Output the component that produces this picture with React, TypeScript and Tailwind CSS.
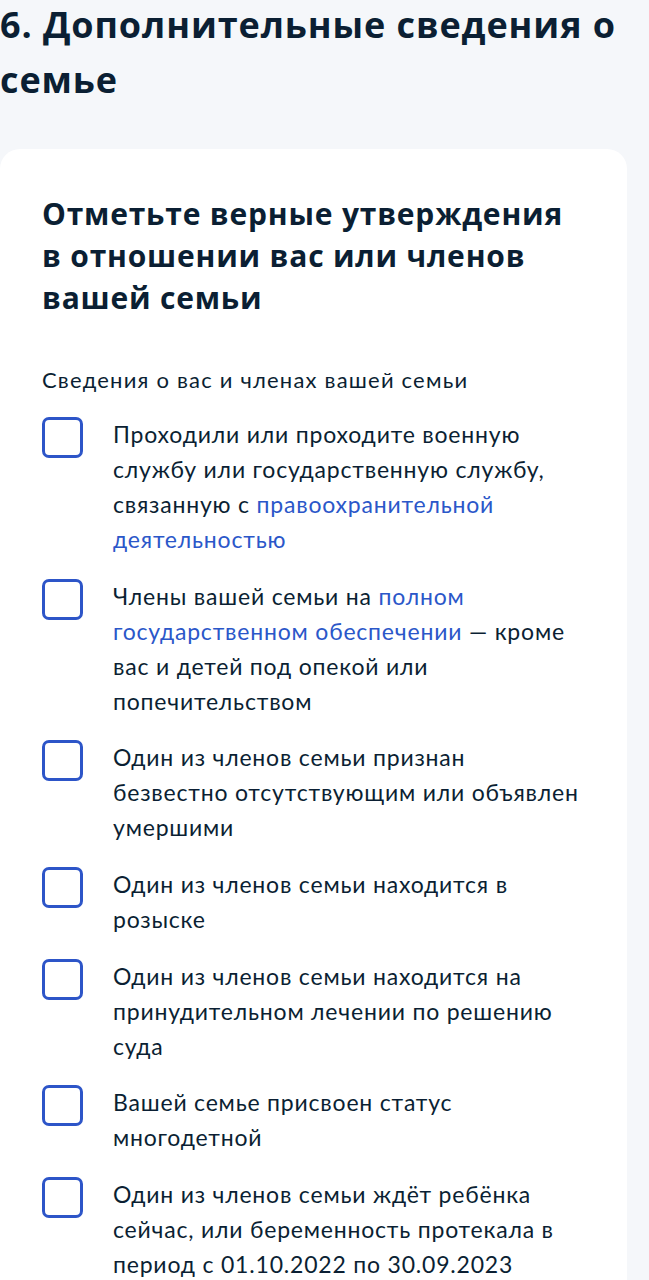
import React from 'react';

type Part = { text: string; link?: boolean };

const items: Part[][] = [
  [
    { text: 'Проходили или проходите военную службу или государственную службу, связанную с ' },
    { text: 'правоохранительной деятельностью', link: true },
  ],
  [
    { text: 'Члены вашей семьи на ' },
    { text: 'полном государственном обеспечении', link: true },
    { text: ' — кроме вас и детей под опекой или попечительством' },
  ],
  [{ text: 'Один из членов семьи признан безвестно отсутствующим или объявлен умершими' }],
  [{ text: 'Один из членов семьи находится в розыске' }],
  [{ text: 'Один из членов семьи находится на принудительном лечении по решению суда' }],
  [{ text: 'Вашей семье присвоен статус многодетной' }],
  [{ text: 'Один из членов семьи ждёт ребёнка сейчас, или беременность протекала в период с 01.10.2022 по 30.09.2023' }],
];

const heading = { fontFamily: '"Open Sans", Lato, sans-serif' };

const App = () => {
  return (
    <div
      className="min-h-[1280px] bg-[#f5f7fa] text-[#0b1f33]"
      style={{ fontFamily: 'Lato, "Noto Sans", sans-serif' }}
    >
      <h1 className="mt-[-3px] text-[36px] leading-[55px] font-bold tracking-[0.9px]" style={heading}>
        6. Дополнительные сведения о семье
      </h1>

      <section className="mt-[42px] w-[627px] rounded-[20px] bg-white px-[42px] pt-[44px] pb-[40px]">
        <h2 className="text-[30px] leading-[42px] font-bold tracking-[0.8px]" style={heading}>
          Отметьте верные утверждения в отношении вас или членов вашей семьи
        </h2>

        <p className="mt-[46px] text-[22px] leading-[30px] tracking-[1.2px]">
          Сведения о вас и членах вашей семьи
        </p>

        <div className="mt-[22px] flex flex-col gap-[21.7px]">
          {items.map((parts, index) => (
            <label key={index} className="flex items-start gap-[30px]">
              <span className="h-[41px] w-[41px] shrink-0 rounded-[7px] border-[3px] border-[#2d55c8]" />
              <span className="text-[23px] leading-[35px] tracking-[0.8px]">
                {parts.map((part, i) =>
                  part.link ? (
                    <span key={i} className="text-[#2b57c9]">
                      {part.text}
                    </span>
                  ) : (
                    <React.Fragment key={i}>{part.text}</React.Fragment>
                  ),
                )}
              </span>
            </label>
          ))}
        </div>
      </section>
    </div>
  );
};

export default App;
